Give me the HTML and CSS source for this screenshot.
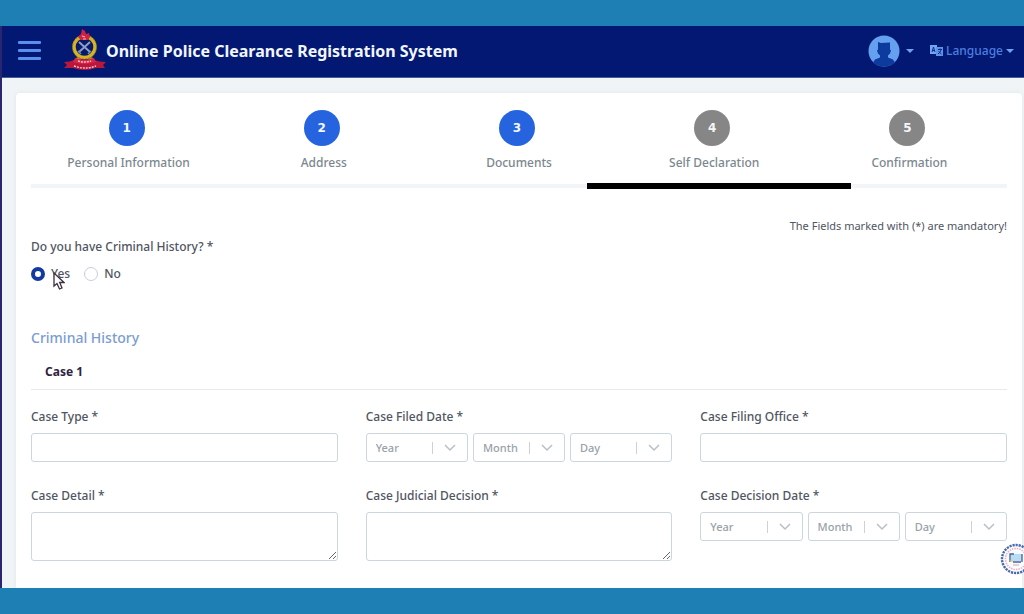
FILE: index.html
```html
<!DOCTYPE html>
<html lang="en">
<head>
<meta charset="utf-8">
<meta name="viewport" content="width=device-width, initial-scale=1">
<title>Online Police Clearance Registration System</title>
<link rel="stylesheet" href="styles.css">
</head>
<body>
<div class="app">
  <header class="topbar">
    <button class="menu-button" type="button" aria-label="Menu"><span></span><span></span><span></span></button>
    <a class="brand" href="#">
      <svg class="emblem" viewBox="0 0 42 44" aria-hidden="true">
        <circle cx="20.500" cy="18" r="10.500" fill="#07196a" stroke="#d5b322" stroke-width="3.400"/>
        <circle cx="20.500" cy="18" r="12" fill="none" stroke="#8c7420" stroke-width="1" stroke-dasharray="1.500 1.800"/>
        <path d="M15 13l11 10M26 13L15 23" stroke="#8f9fc4" stroke-width="1.900"/>
        <path d="M14 22l3 3M27 22l-3 3" stroke="#7887ad" stroke-width="1.500"/>
        <path d="M18 0l3 2 1 3 3-1 1 4-2 3h-7l-3-3 3-3z" fill="#cf2143"/>
        <path d="M18 7l3 1M19 10h3" stroke="#f3b5bb" stroke-width="1.200"/>
        <path d="M13 28l-3 5 4 1 3-4zM28 28l3 5-4 1-3-4z" fill="#b98b24"/>
        <path d="M0 33q6 0 10-2 10 3 20 0 6 2 12 2l-3 3 2 3-9 0q-11 4-23 0l-9 0 3-3z" fill="#b9183a"/>
        <path d="M11 29q9 3 19 0l2 4q-11 4-23 0z" fill="#d5264a"/>
        <path d="M14 32q6 2 13 0M10 37q11 4 22 0" fill="none" stroke="#f5c3c8" stroke-width="1.400" stroke-dasharray="2 1"/>
      </svg>
      <span>Online Police Clearance Registration System</span>
    </a>
    <nav class="tools" aria-label="Account and language">
      <button class="tool" type="button" aria-label="Account">
        <svg class="avatar" viewBox="0 0 32 32" aria-hidden="true">
          <defs><clipPath id="disc"><circle cx="16" cy="16" r="15.500"/></clipPath></defs>
          <circle cx="16" cy="16" r="15.500" fill="#659ff0"/>
          <g clip-path="url(#disc)" fill="#0c3b9d">
            <path d="M10 7l3 1 9-.5v7l1 1-1 3-2 2v2l5 2 2 3v5H5v-5l2-3 5-2v-2l-2-2-1-3 1-1z"/>
          </g>
        </svg>
        <span class="caret"></span>
      </button>
      <button class="tool language" type="button">
        <svg class="translate" viewBox="0 0 13 12" aria-hidden="true">
          <path d="M0 0h7v9H0z" fill="#72a4f4"/>
          <path d="M6 2h7v9H6z" fill="#5f93ea"/>
          <path d="M2 7l1.500-5L5 7M2.500 5.500h2" stroke="#0b2b8b" fill="none"/>
          <path d="M8 4.500h4M10 3.500v1M11 5q-1 3-3 4M8.500 6.500l3 2.500" stroke="#0b2b8b" fill="none"/>
        </svg>
        <span>Language</span>
        <span class="caret"></span>
      </button>
    </nav>
  </header>

  <main class="page">
    <form class="card">
      <ol class="steps">
        <li class="step done"><span class="dot">1</span><span>Personal Information</span></li>
        <li class="step done"><span class="dot">2</span><span>Address</span></li>
        <li class="step done"><span class="dot">3</span><span>Documents</span></li>
        <li class="step" aria-current="step"><span class="dot">4</span><span>Self Declaration</span></li>
        <li class="step"><span class="dot">5</span><span>Confirmation</span></li>
      </ol>
      <p class="mandatory">The Fields marked with (*) are mandatory!</p>

      <fieldset class="question">
        <legend>Do you have Criminal History? *</legend>
        <div class="choices">
          <label class="choice"><input type="radio" name="history" checked><span>Yes</span>
            <svg class="pointer" viewBox="0 0 12 18" aria-hidden="true"><path d="M1 1v13l3-2.500 2.500 5.500 2.500-1-2.300-5.500H11z" fill="#fff" stroke="#3d3040" stroke-width="1.300"/></svg>
          </label>
          <label class="choice"><input type="radio" name="history"><span>No</span></label>
        </div>
      </fieldset>

      <h2 class="section-title">Criminal History</h2>
      <h3 class="case-title">Case 1</h3>

      <div class="fields">
        <div class="field">
          <label for="type">Case Type *</label>
          <input class="control" id="type" type="text">
        </div>
        <div class="field" role="group" aria-labelledby="filed">
          <span id="filed">Case Filed Date *</span>
          <div class="date">
            <div class="picker"><select aria-label="Filed year"><option>Year</option></select><svg viewBox="0 0 12 8" aria-hidden="true"><path d="M1 1l5 5 5-5"/></svg></div>
            <div class="picker"><select aria-label="Filed month"><option>Month</option></select><svg viewBox="0 0 12 8" aria-hidden="true"><path d="M1 1l5 5 5-5"/></svg></div>
            <div class="picker"><select aria-label="Filed day"><option>Day</option></select><svg viewBox="0 0 12 8" aria-hidden="true"><path d="M1 1l5 5 5-5"/></svg></div>
          </div>
        </div>
        <div class="field">
          <label for="office">Case Filing Office *</label>
          <input class="control" id="office" type="text">
        </div>
        <div class="field">
          <label for="detail">Case Detail *</label>
          <textarea class="control area" id="detail"></textarea>
        </div>
        <div class="field">
          <label for="judicial">Case Judicial Decision *</label>
          <textarea class="control area" id="judicial"></textarea>
        </div>
        <div class="field" role="group" aria-labelledby="decided">
          <span id="decided">Case Decision Date *</span>
          <div class="date">
            <div class="picker"><select aria-label="Decision year"><option>Year</option></select><svg viewBox="0 0 12 8" aria-hidden="true"><path d="M1 1l5 5 5-5"/></svg></div>
            <div class="picker"><select aria-label="Decision month"><option>Month</option></select><svg viewBox="0 0 12 8" aria-hidden="true"><path d="M1 1l5 5 5-5"/></svg></div>
            <div class="picker"><select aria-label="Decision day"><option>Day</option></select><svg viewBox="0 0 12 8" aria-hidden="true"><path d="M1 1l5 5 5-5"/></svg></div>
          </div>
        </div>
      </div>
    </form>
  </main>

  <svg class="seal" viewBox="0 0 32 32" aria-hidden="true">
    <circle cx="16" cy="16" r="14" fill="#fbfcff" stroke="#4a68ae" stroke-width="2.400" stroke-dasharray="2.200 .9"/>
    <circle cx="16" cy="16" r="10.500" fill="none" stroke="#e3b4bd" stroke-width="1.600" stroke-dasharray="1.500 1"/>
    <circle cx="16" cy="16" r="8" fill="#f5faff"/>
    <path d="M10 11h12v7H11z" fill="#b9ddf0"/>
    <path d="M10 19v-8h4M22 11v8M13 19h8" stroke="#47619d" stroke-width="1.300" fill="none"/>
    <path d="M10 18h3" stroke="#e3c760" stroke-width="1.200"/>
    <path d="M13 22h6" stroke="#e1a2ad"/>
  </svg>
</div>
</body>
</html>
```
FILE: styles.css
```css
* { box-sizing: border-box; }

body {
  margin: 0;
  min-height: 100vh;
  display: flex;
  flex-direction: column;
  padding: 26px 0;
  background: #1e7fb4;
  color: #4f5561;
  font: 500 12px/16px "Noto Sans", "Open Sans", sans-serif;
}

button, input, select, textarea { font: inherit; color: inherit; }

.app {
  position: relative;
  flex: 1;
  display: flex;
  flex-direction: column;
  overflow: hidden;
  border-left: 2px solid #29266f;
  background: #f0f4f6;
}

/* Top bar */
.topbar {
  display: flex;
  align-items: center;
  height: 52px;
  padding: 0 10px 2px 16px;
  background: #021872;
  border-bottom: 1px solid #4a5c96;
}

.menu-button {
  display: flex;
  flex-direction: column;
  gap: 5px;
  width: 23px;
  padding: 0;
  border: 0;
  background: none;
}

.menu-button span {
  height: 3px;
  border-radius: 1px;
  background: #5b8fef;
}

.brand {
  display: flex;
  align-items: center;
  margin-left: 23px;
  color: #f1f6ff;
  font-size: 16px;
  font-weight: 700;
  line-height: 24px;
  text-decoration: none;
}

.emblem { width: 42px; height: 44px; }

.tools {
  display: flex;
  align-items: center;
  gap: 16px;
  margin-left: auto;
}

.tool {
  display: flex;
  align-items: center;
  gap: 6px;
  padding: 0;
  border: 0;
  background: none;
  color: #4c7fe0;
  font-size: 12px;
}

.language { gap: 3px; }
.avatar { width: 32px; height: 32px; }
.translate { width: 13px; height: 12px; }

.caret {
  border: 4px solid transparent;
  border-top-color: #70a2f2;
  border-bottom: 0;
}

/* Card */
.page {
  flex: 1;
  display: flex;
  padding: 15px 2px 0 14px;
}

.card {
  flex: 1;
  min-width: 0;
  padding: 17px 15px 26px;
  border-radius: 4px 4px 0 0;
  background: #fff;
  box-shadow: 0 0 4px #dfe6ea;
}

.steps {
  position: relative;
  display: grid;
  grid-template-columns: repeat(5, 1fr);
  margin: 0;
  padding: 0 0 13px;
  list-style: none;
  border-bottom: 4px solid #f1f5f8;
}

.steps::after {
  content: "";
  position: absolute;
  left: 57%;
  right: 16%;
  bottom: -5px;
  height: 6px;
  background: #000;
}

.step {
  display: flex;
  flex-direction: column;
  align-items: center;
  gap: 9px;
  color: #7b878e;
}

.dot {
  display: grid;
  place-items: center;
  width: 36px;
  height: 36px;
  margin-right: 4px;
  border-radius: 50%;
  background: #868686;
  color: #f4f7fa;
  font-weight: 900;
  font-family: "DejaVu Sans", sans-serif;
}

.done .dot { background: #2563df; }

.mandatory {
  margin: 30px 0 0;
  font-size: 11px;
  font-weight: 400;
  text-align: right;
}

/* Question */
.question {
  margin: 5px 0 0;
  padding: 0;
  border: 0;
}

.question legend { padding: 0; }

.choices {
  display: flex;
  gap: 14px;
  margin-top: 11px;
}

.choice {
  position: relative;
  display: flex;
  align-items: center;
  gap: 6px;
}

.choice input {
  appearance: none;
  width: 14px;
  height: 14px;
  margin: 0;
  border: 1px solid #c5ced8;
  border-radius: 50%;
  background: #fff;
}

.choice input:checked { border: 4px solid #123a9f; }

.pointer {
  position: absolute;
  left: 22px;
  top: 6px;
  width: 12px;
  height: 18px;
}

.section-title {
  margin: 46px 0 0;
  color: #7b9cd2;
  font-size: 14px;
  font-weight: 500;
  line-height: 20px;
}

.case-title {
  margin: 16px 0 0;
  padding: 0 14px 9px;
  border-bottom: 1px solid #e6eaec;
  color: #30243f;
  font-size: 12px;
  font-weight: 700;
}

/* Fields */
.fields {
  display: grid;
  grid-template-columns: repeat(3, minmax(0, 1fr));
  gap: 26px 28px;
  margin-top: 19px;
}

.field {
  display: flex;
  flex-direction: column;
  gap: 8px;
}

.control, .picker {
  height: 29px;
  border: 1px solid #ccd6dd;
  border-radius: 3px;
  background: #fff;
}

.control { width: 100%; padding: 4px 8px; }

.area {
  height: 49px;
  display: block;
  resize: vertical;
}

.date {
  display: grid;
  grid-template-columns: 10fr 9fr 10fr;
  gap: 5px;
}

.picker {
  position: relative;
  color: #98a2aa;
  font-size: 11px;
}

.picker select {
  appearance: none;
  display: block;
  width: 100%;
  height: 100%;
  padding: 0 36px 0 9px;
  border: 0;
  background: none;
}

.picker::after {
  content: "";
  position: absolute;
  right: 34px;
  top: 8px;
  bottom: 7px;
  border-left: 1px solid #cbd3d9;
}

.picker svg {
  position: absolute;
  right: 11px;
  top: 10px;
  width: 12px;
  height: 8px;
  fill: none;
  stroke: #b6c0c6;
  stroke-width: 1.500;
  pointer-events: none;
}

.seal {
  position: absolute;
  right: -8px;
  bottom: 13px;
  width: 32px;
  height: 32px;
}
```
